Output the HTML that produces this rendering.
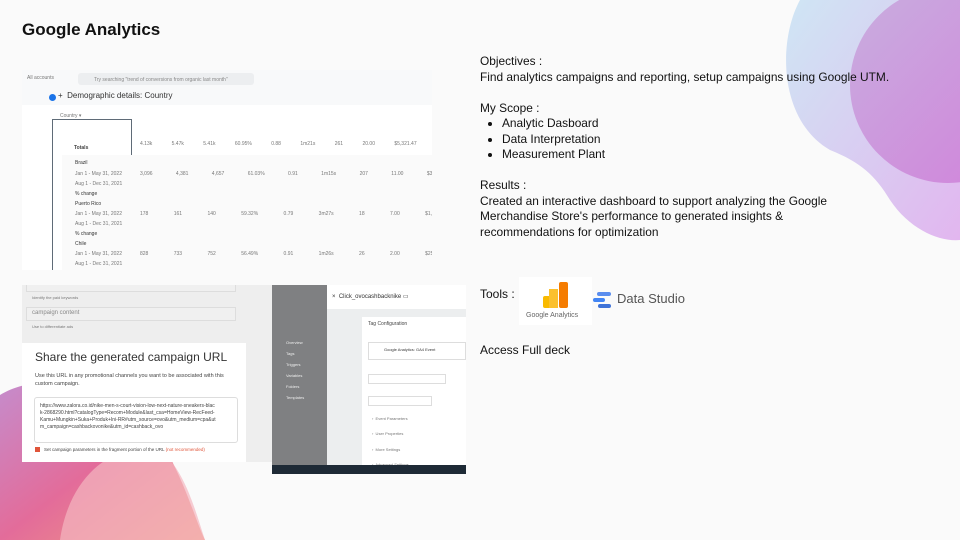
<!DOCTYPE html>
<html><head><meta charset="utf-8"><style>
*{margin:0;padding:0;box-sizing:border-box}
body{width:960px;height:540px;overflow:hidden;background:#fafafa;position:relative;font-family:"Liberation Sans",sans-serif;color:#111}
.abs{position:absolute}
h1{position:absolute;left:22px;top:20px;font-size:17px;font-weight:bold;color:#111}
.txt{left:480px;top:54px;font-size:11.9px;line-height:15.5px;color:#111}
.txt ul{margin-left:22px;list-style:disc;padding-left:0}
.t{font-size:5px;color:#777;position:absolute;white-space:nowrap}
</style></head><body>
<svg class="abs" style="left:0;top:0" width="960" height="540">
<defs>
<linearGradient id="g1" x1="0" y1="0" x2="1" y2="1"><stop offset="0" stop-color="#cfe6f4"/><stop offset="1" stop-color="#e2b6ef"/></linearGradient>
<linearGradient id="g2" x1="0" y1="0" x2="1" y2="1"><stop offset="0" stop-color="#c7a9dd"/><stop offset="1" stop-color="#d07ad8"/></linearGradient>
<linearGradient id="g3" x1="0" y1="0" x2="1" y2="1"><stop offset="0" stop-color="#c58ccc"/><stop offset="0.5" stop-color="#e36c9a"/><stop offset="1" stop-color="#f3a07f"/></linearGradient>
</defs>
<path d="M800 0 C778 40 778 120 830 150 C860 162 875 175 890 200 C910 230 940 242 960 240 L960 0 Z" fill="url(#g1)"/>
<circle cx="948" cy="85" r="98" fill="url(#g2)" opacity="0.9"/>
<path d="M0 395 C40 370 120 380 160 440 C185 480 195 520 205 540 L0 540 Z" fill="url(#g3)"/>
<path d="M60 540 C70 470 120 440 160 450 C185 470 195 510 205 540 Z" fill="#f4b6c0" opacity="0.7"/>
</svg>
<h1>Google Analytics</h1>
<div class="abs txt">
Objectives :<br>Find analytics campaigns and reporting, setup campaigns using Google UTM.<br><br>
My Scope :<ul><li>Analytic Dasboard</li><li>Data Interpretation</li><li>Measurement Plant</li></ul><br>
Results :<br>Created an interactive dashboard to support analyzing the Google<br>Merchandise Store's performance to generated insights &amp;<br>recommendations for optimization
</div>
<div class="abs" style="left:480px;top:287px;font-size:12px">Tools :</div>
<div class="abs" style="left:519px;top:277px;width:73px;height:48px;background:#fff">
<div class="abs" style="left:24px;top:19px;width:9px;height:12px;background:#f9ba00;border-radius:2px"></div>
<div class="abs" style="left:30px;top:12px;width:9px;height:19px;background:#fbc02d"></div>
<div class="abs" style="left:40px;top:5px;width:9px;height:26px;background:#f57c00;border-radius:2px"></div>
<div class="abs" style="left:7px;top:35px;font-size:7px;color:#666">Google Analytics</div>
</div>
<svg class="abs" style="left:593px;top:291px" width="20" height="18"><rect x="4" y="1" width="14" height="4" rx="2" fill="#5a8dee"/><rect x="0" y="7" width="12" height="4" rx="2" fill="#4285f4"/><rect x="5" y="13" width="13" height="4" rx="2" fill="#3f73d8"/></svg>
<div class="abs" style="left:617px;top:291px;font-size:13px;color:#555">Data Studio</div>
<div class="abs" style="left:480px;top:343px;font-size:12px">Access Full deck</div>

<div class="abs" style="left:22px;top:70px;width:410px;height:200px;background:#f8f9fa;overflow:hidden">
<div class="t" style="left:5px;top:5px">All accounts</div>
<div class="abs" style="left:56px;top:3px;width:176px;height:12px;background:#eceef0;border-radius:3px"></div>
<div class="t" style="left:72px;top:7px;color:#888">Try searching "trend of conversions from organic last month"</div>
<div class="abs" style="left:27px;top:24px;width:7px;height:7px;border-radius:50%;background:#1a73e8"></div>
<div class="abs" style="left:36px;top:21px;font-size:8px;color:#333">+ &nbsp;Demographic details: Country</div>
<div class="abs" style="left:0;top:35px;width:410px;height:165px;background:#fff"></div>
<div class="abs" style="left:30px;top:49px;width:80px;height:151px;border:1px solid #5f6b77;border-bottom:none"></div>
<div class="t" style="left:38px;top:43px">Country ▾</div>
<div class="t" style="left:52px;top:75px;font-weight:bold;color:#444">Totals</div>
<div class="abs" style="left:40px;top:85px;width:375px;height:115px;background:#fafafa"></div>
<div class="t" style="left:53px;top:90px;color:#333">Brazil</div>
<div class="t" style="left:53px;top:101px">Jan 1 - May 31, 2022</div>
<div class="t" style="left:53px;top:111px">Aug 1 - Dec 31, 2021</div>
<div class="t" style="left:53px;top:121px;color:#333">% change</div>
<div class="t" style="left:53px;top:131px;color:#333">Puerto Rico</div>
<div class="t" style="left:53px;top:141px">Jan 1 - May 31, 2022</div>
<div class="t" style="left:53px;top:151px">Aug 1 - Dec 31, 2021</div>
<div class="t" style="left:53px;top:161px;color:#333">% change</div>
<div class="t" style="left:53px;top:171px;color:#333">Chile</div>
<div class="t" style="left:53px;top:181px">Jan 1 - May 31, 2022</div>
<div class="t" style="left:53px;top:191px">Aug 1 - Dec 31, 2021</div>
<div class="t" style="left:118px;top:71px;word-spacing:18px">4.13k 5.47k 5.41k 60.95% 0.88 1m21s 261 20.00 $5,321.47</div>
<div class="t" style="left:118px;top:101px;word-spacing:22px">3,096 4,381 4,657 61.03% 0.91 1m15s 207 11.00 $3,227.60</div>
<div class="t" style="left:118px;top:141px;word-spacing:24px">178 161 140 59.32% 0.79 3m27s 18 7.00 $1,834.82</div>
<div class="t" style="left:118px;top:181px;word-spacing:24px">828 733 752 56.49% 0.91 1m26s 26 2.00 $259.25</div>
</div>

<div class="abs" style="left:22px;top:285px;width:250px;height:177px;background:#eee;overflow:hidden">
<div class="abs" style="left:4px;top:-4px;width:210px;height:11px;border:1px solid #ddd;background:#f0f0f0"></div>
<div class="t" style="left:10px;top:10px;font-size:4px">Identify the paid keywords</div>
<div class="abs" style="left:4px;top:22px;width:210px;height:14px;border:1px solid #ddd;background:#f0f0f0"></div>
<div class="t" style="left:10px;top:25px;font-size:6px;color:#888">campaign content</div>
<div class="t" style="left:10px;top:39px;font-size:4px">Use to differentiate ads</div>
<div class="abs" style="left:0;top:58px;width:224px;height:119px;background:#fff"></div>
<div class="abs" style="left:13px;top:65px;font-size:12px;color:#333">Share the generated campaign URL</div>
<div class="abs" style="left:13px;top:87px;width:200px;font-size:5.5px;line-height:8px;color:#444">Use this URL in any promotional channels you want to be associated with this custom campaign.</div>
<div class="abs" style="left:12px;top:112px;width:204px;height:46px;border:1px solid #ddd;border-radius:3px;padding:5px 20px 0 5px;font-size:5px;line-height:7px;color:#444;word-break:break-all">https://www.zalora.co.id/nike-men-s-court-vision-low-next-nature-sneakers-black-2868290.html?catalogType=Recom+Module&amp;last_csa=HomeView-RecFeed-Kamu+Mungkin+Suka+Produk+Ini-RR#utm_source=ovo&amp;utm_medium=cpa&amp;utm_campaign=cashbackovonike&amp;utm_id=cashback_ovo</div>
<div class="abs" style="left:13px;top:162px;width:5px;height:5px;background:#e0553a"></div>
<div class="t" style="left:22px;top:162px;font-size:4.5px;color:#444">Set campaign parameters in the fragment portion of the URL <span style="color:#e0553a">(not recommended)</span></div>
</div>

<div class="abs" style="left:272px;top:285px;width:194px;height:189px;background:#888;overflow:hidden">
<div class="abs" style="left:0;top:0;width:55px;height:180px;background:#7f8082"></div>
<div class="abs" style="left:55px;top:0;width:139px;height:180px;background:#eceeef"></div>
<div class="abs" style="left:55px;top:0;width:139px;height:24px;background:#fff"></div>
<div class="abs" style="left:60px;top:8px;font-size:6px;color:#333">×&nbsp; Click_ovocashbacknike ▭</div>
<div class="abs" style="left:90px;top:32px;width:104px;height:148px;background:#fff"></div>
<div class="t" style="left:96px;top:36px;color:#444">Tag Configuration</div>
<div class="abs" style="left:96px;top:57px;width:98px;height:18px;border:1px solid #ddd"></div>
<div class="t" style="left:112px;top:62px;color:#333;font-size:4px">Google Analytics: GA4 Event</div>
<div class="abs" style="left:96px;top:89px;width:78px;height:10px;border:1px solid #ddd"></div>
<div class="abs" style="left:96px;top:111px;width:64px;height:10px;border:1px solid #ddd"></div>
<div class="t" style="left:100px;top:131px;font-size:4px">›&nbsp; Event Parameters</div>
<div class="t" style="left:100px;top:146px;font-size:4px">›&nbsp; User Properties</div>
<div class="t" style="left:100px;top:162px;font-size:4px">›&nbsp; More Settings</div>
<div class="t" style="left:100px;top:177px;font-size:4px">›&nbsp; Advanced Settings</div>
<div class="t" style="left:14px;top:55px;color:#eee;font-size:4px">Overview</div>
<div class="t" style="left:14px;top:66px;color:#eee;font-size:4px">Tags</div>
<div class="t" style="left:14px;top:77px;color:#eee;font-size:4px">Triggers</div>
<div class="t" style="left:14px;top:88px;color:#eee;font-size:4px">Variables</div>
<div class="t" style="left:14px;top:99px;color:#eee;font-size:4px">Folders</div>
<div class="t" style="left:14px;top:110px;color:#eee;font-size:4px">Templates</div>
<div class="abs" style="left:0;top:180px;width:194px;height:9px;background:#1e2a36"></div>
</div>
</body></html>
